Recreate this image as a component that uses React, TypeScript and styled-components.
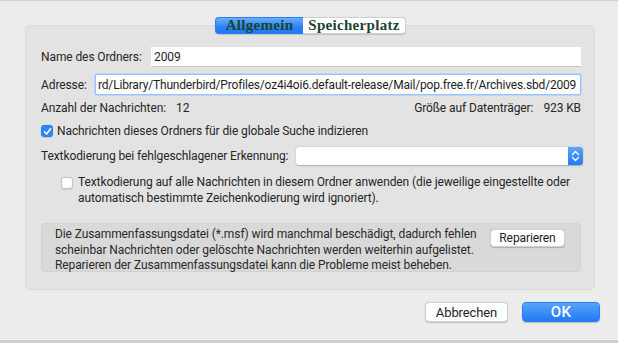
import React from 'react';
import styled, { createGlobalStyle } from 'styled-components';

const GlobalStyle = createGlobalStyle`
  html, body {
    margin: 0;
    padding: 0;
    background: #ececec;
  }
  body {
    font-family: Roboto, "Liberation Sans", Arial, sans-serif;
    font-size: 12px;
    letter-spacing: -0.1px;
    color: #262626;
  }
`;

const Window = styled.div`
  width: 618px;
  height: 343px;
  box-sizing: border-box;
  background: #ececec;
  border-top: 1px solid #d4d4d4;
  border-bottom: 3px solid #cfcfcf;
  display: flex;
  flex-direction: column;
  padding-top: 16px;
  overflow: hidden;
`;

const TabBar = styled.div`
  display: flex;
  justify-content: center;
  margin: 0 0 -9px 3px;
  position: relative;
  z-index: 1;
`;

const Tab = styled.div<{ $active?: boolean; $w: number }>`
  width: ${p => p.$w}px;
  height: 17px;
  box-sizing: border-box;
  display: flex;
  align-items: center;
  justify-content: center;
  font-family: "Liberation Serif", "Times New Roman", serif;
  font-weight: bold;
  font-size: 15px;
  letter-spacing: 0.3px;
  color: #1d4331;
  background: ${p => (p.$active ? 'linear-gradient(#6aaefc, #2c83f7 60%, #1f7af4)' : '#ffffff')};
  border: 1px solid ${p => (p.$active ? '#2a7ff0' : '#cfcfcf')};
  border-radius: ${p => (p.$active ? '4px 0 0 4px' : '0 4px 4px 0')};
  ${p => (p.$active ? 'border-right: none;' : 'border-left: none;')}
  box-shadow: 0 0.5px 1px rgba(0, 0, 0, 0.15);
`;

const Panel = styled.div`
  margin: 0 23px 0 25px;
  background: #e3e3e3;
  border: 1px solid #dcdcdc;
  border-radius: 5px;
  padding: 21px 13px 17px 15px;
  display: flex;
  flex-direction: column;
`;

const Row = styled.div<{ $mt?: number; $h?: number }>`
  display: flex;
  align-items: center;
  margin-top: ${p => p.$mt ?? 0}px;
  height: ${p => (p.$h ? `${p.$h}px` : 'auto')};
`;

const Label = styled.span<{ $w?: number }>`
  white-space: nowrap;
  width: ${p => (p.$w ? `${p.$w}px` : 'auto')};
  flex-shrink: 0;
`;

const TextInput = styled.div<{ $focus?: boolean }>`
  flex: 1;
  min-width: 0;
  height: ${p => (p.$focus ? 21 : 19)}px;
  box-sizing: border-box;
  background: #ffffff;
  display: flex;
  align-items: center;
  padding-left: ${p => (p.$focus ? 2 : 3)}px;
  overflow: hidden;
  white-space: nowrap;
  letter-spacing: ${p => (p.$focus ? -0.18 : -0.1)}px;
  border: ${p => (p.$focus ? '1px solid #9cc3f5' : 'none')};
  box-shadow: ${p => (p.$focus ? '0 0 0 1px #b9d5f7' : '0 0.5px 1px rgba(0,0,0,0.12)')};
  border-radius: ${p => (p.$focus ? 2 : 0)}px;
  color: #1e1e1e;
`;

const Stats = styled(Row)`
  justify-content: space-between;
`;

const Value = styled.span`
  margin-left: 10px;
`;

const CheckBox = styled.span<{ $checked?: boolean }>`
  width: 12px;
  height: 12px;
  flex-shrink: 0;
  box-sizing: border-box;
  border-radius: 3px;
  display: inline-flex;
  align-items: center;
  justify-content: center;
  background: ${p => (p.$checked ? '#2f87f6' : '#ffffff')};
  border: 1px solid ${p => (p.$checked ? '#2a7ff0' : '#c4c4c4')};
  box-shadow: 0 0.5px 1px rgba(0, 0, 0, 0.12);
`;

const CheckLabel = styled.span`
  margin-left: 4px;
  white-space: nowrap;
`;

const Select = styled.div`
  flex: 1;
  height: 18px;
  margin-left: 8px;
  margin-right: -2px;
  background: #ffffff;
  border-radius: 3px;
  display: flex;
  justify-content: flex-end;
  box-shadow: 0 0.5px 1.5px rgba(0, 0, 0, 0.25);
`;

const Stepper = styled.span`
  width: 15px;
  height: 18px;
  border-radius: 0 3px 3px 0;
  background: linear-gradient(#5ba6fb, #1f7af4);
  display: flex;
  align-items: center;
  justify-content: center;
`;

const Indented = styled.div`
  display: flex;
  align-items: flex-start;
  margin: 9px 0 0 20px;
  line-height: 16px;
`;

const IndentCheck = styled(CheckBox)`
  margin-top: 3px;
`;

const IndentText = styled.div`
  margin-left: 5px;
  white-space: nowrap;
`;

const InfoBox = styled.div`
  margin-top: 17px;
  height: 49px;
  box-sizing: border-box;
  background: #d9d9d9;
  border: 1px solid #d2d2d2;
  border-radius: 4px;
  padding: 3px 15px 0 13px;
  display: flex;
  justify-content: space-between;
  align-items: flex-start;
  line-height: 15.5px;
  color: #2a2a2a;
  white-space: nowrap;
`;

const Button = styled.button<{ $primary?: boolean; $w: number; $h: number }>`
  width: ${p => p.$w}px;
  height: ${p => p.$h}px;
  font-family: Roboto, "Liberation Sans", Arial, sans-serif;
  font-size: ${p => (p.$primary ? 15 : 13)}px;
  font-weight: ${p => (p.$primary ? 500 : 'normal')};
  letter-spacing: ${p => (p.$primary ? 0.3 : -0.1)}px;
  border-radius: 4px;
  border: 1px solid ${p => (p.$primary ? '#2a7ff0' : '#d0d0d0')};
  background: ${p => (p.$primary ? 'linear-gradient(#59a4fb, #1f7af4)' : '#ffffff')};
  color: ${p => (p.$primary ? '#ffffff' : '#1e1e1e')};
  box-shadow: 0 0.5px 1px rgba(0, 0, 0, 0.2);
  padding: 0;
  flex-shrink: 0;
`;

const RepairButton = styled(Button)`
  margin-top: 2px;
  font-size: 12px;
`;

const Footer = styled.div`
  display: flex;
  justify-content: flex-end;
  gap: 14px;
  padding: 12px 18px 0 0;
`;

export default function App() {
  return (
    <>
      <GlobalStyle />
      <Window>
        <TabBar>
          <Tab $active $w={88}>Allgemein</Tab>
          <Tab $w={103}>Speicherplatz</Tab>
        </TabBar>
        <Panel>
          <Row $h={19}>
            <Label $w={110}>Name des Ordners:</Label>
            <TextInput>2009</TextInput>
          </Row>
          <Row $mt={8} $h={21}>
            <Label $w={54}>Adresse:</Label>
            <TextInput $focus>
              rd/Library/Thunderbird/Profiles/oz4i4oi6.default-release/Mail/pop.free.fr/Archives.sbd/2009
            </TextInput>
          </Row>
          <Stats $mt={5} $h={16}>
            <span>
              Anzahl der Nachrichten:<Value>12</Value>
            </span>
            <span>
              Größe auf Datenträger:<Value>923 KB</Value>
            </span>
          </Stats>
          <Row $mt={7} $h={16}>
            <CheckBox $checked>
              <svg width="9" height="9" viewBox="0 0 9 9">
                <path d="M1.5 4.8 L3.6 7 L7.6 1.8" fill="none" stroke="#fff" strokeWidth="1.6" strokeLinecap="round" strokeLinejoin="round" />
              </svg>
            </CheckBox>
            <CheckLabel>Nachrichten dieses Ordners für die globale Suche indizieren</CheckLabel>
          </Row>
          <Row $mt={8} $h={18}>
            <Label>Textkodierung bei fehlgeschlagener Erkennung:</Label>
            <Select>
              <Stepper>
                <svg width="9" height="12" viewBox="0 0 9 12">
                  <path d="M1.5 4.5 L4.5 1.5 L7.5 4.5 M1.5 7.5 L4.5 10.5 L7.5 7.5" fill="none" stroke="#fff" strokeWidth="1.4" strokeLinecap="round" strokeLinejoin="round" />
                </svg>
              </Stepper>
            </Select>
          </Row>
          <Indented>
            <IndentCheck />
            <IndentText>
              Textkodierung auf alle Nachrichten in diesem Ordner anwenden (die jeweilige eingestellte oder
              <br />
              automatisch bestimmte Zeichenkodierung wird ignoriert).
            </IndentText>
          </Indented>
          <InfoBox>
            <div>
              Die Zusammenfassungsdatei (*.msf) wird manchmal beschädigt, dadurch fehlen
              <br />
              scheinbar Nachrichten oder gelöschte Nachrichten werden weiterhin aufgelistet.
              <br />
              Reparieren der Zusammenfassungsdatei kann die Probleme meist beheben.
            </div>
            <RepairButton $w={75} $h={18}>Reparieren</RepairButton>
          </InfoBox>
        </Panel>
        <Footer>
          <Button $w={83} $h={20}>Abbrechen</Button>
          <Button $primary $w={78} $h={20}>OK</Button>
        </Footer>
      </Window>
    </>
  );
}
